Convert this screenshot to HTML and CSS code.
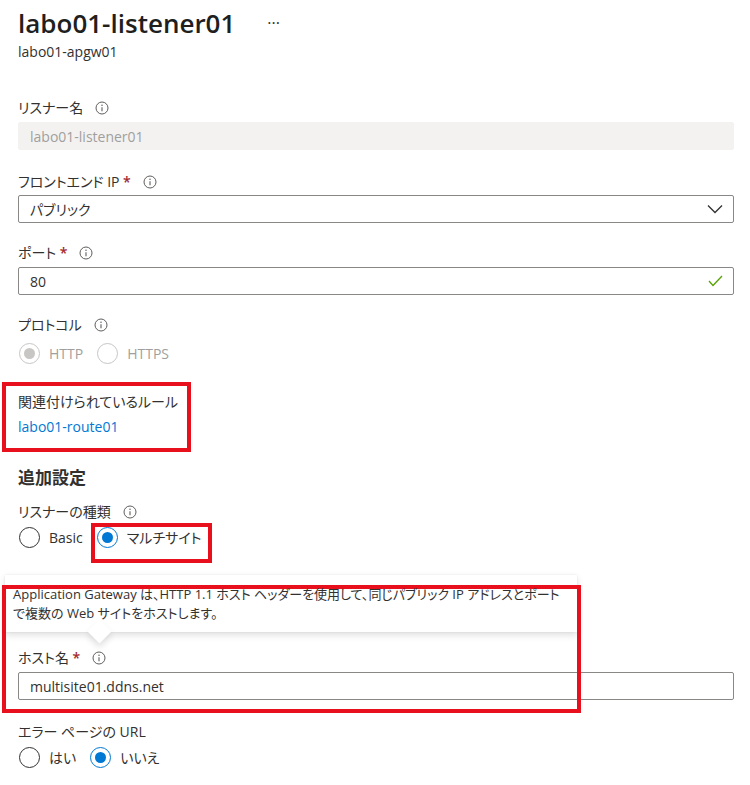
FILE: index.html
```html
<!DOCTYPE html>
<html lang="ja">
<head>
<meta charset="utf-8">
<link rel="stylesheet" href="styles.css">
</head>
<body>
<div class="page">
  <div class="title-row">
    <h1 class="title">labo01-listener01</h1>
    <span class="more">···</span>
  </div>
  <div class="subtitle">labo01-apgw01</div>

  <div class="label l-name"><span>リスナー名</span><svg class="info" width="14" height="14" viewBox="0 0 14 14"><circle cx="7" cy="7" r="6" fill="none" stroke="#605e5c" stroke-width="1"/><path d="M7 6.2v4" stroke="#605e5c" stroke-width="1.1"/><circle cx="7" cy="4.2" r="0.75" fill="#605e5c"/></svg></div>
  <div class="input disabled">labo01-listener01</div>

  <div class="label l-fe"><span>フロントエンド IP <span class="req">*</span></span><svg class="info" width="14" height="14" viewBox="0 0 14 14"><circle cx="7" cy="7" r="6" fill="none" stroke="#605e5c" stroke-width="1"/><path d="M7 6.2v4" stroke="#605e5c" stroke-width="1.1"/><circle cx="7" cy="4.2" r="0.75" fill="#605e5c"/></svg></div>
  <div class="input select"><span>パブリック</span><svg class="chev" width="16" height="10" viewBox="0 0 16 10"><polyline points="1,1.5 8,8.5 15,1.5" fill="none" stroke="#323130" stroke-width="1.3"/></svg></div>

  <div class="label l-port"><span>ポート <span class="req">*</span></span><svg class="info" width="14" height="14" viewBox="0 0 14 14"><circle cx="7" cy="7" r="6" fill="none" stroke="#605e5c" stroke-width="1"/><path d="M7 6.2v4" stroke="#605e5c" stroke-width="1.1"/><circle cx="7" cy="4.2" r="0.75" fill="#605e5c"/></svg></div>
  <div class="input valid"><span>80</span><svg class="check" width="15" height="12" viewBox="0 0 15 12"><polyline points="1,6 5,10.5 14,1" fill="none" stroke="#57a300" stroke-width="1.3"/></svg></div>

  <div class="label l-proto"><span>プロトコル</span><svg class="info" width="14" height="14" viewBox="0 0 14 14"><circle cx="7" cy="7" r="6" fill="none" stroke="#605e5c" stroke-width="1"/><path d="M7 6.2v4" stroke="#605e5c" stroke-width="1.1"/><circle cx="7" cy="4.2" r="0.75" fill="#605e5c"/></svg></div>
  <div class="radio-row r-proto">
    <span class="radio dis checked"></span><span class="rlabel dis-text">HTTP</span>
    <span class="radio dis"></span><span class="rlabel dis-text">HTTPS</span>
  </div>

  <div class="label l-rule"><span>関連付けられているルール</span></div>
  <div class="link">labo01-route01</div>

  <h2 class="section">追加設定</h2>

  <div class="label l-type"><span>リスナーの種類</span><svg class="info" width="14" height="14" viewBox="0 0 14 14"><circle cx="7" cy="7" r="6" fill="none" stroke="#605e5c" stroke-width="1"/><path d="M7 6.2v4" stroke="#605e5c" stroke-width="1.1"/><circle cx="7" cy="4.2" r="0.75" fill="#605e5c"/></svg></div>
  <div class="radio-row r-type">
    <span class="radio"></span><span class="rlabel">Basic</span>
    <span class="radio on"></span><span class="rlabel">マルチサイト</span>
  </div>

  <div class="callout">
    <div class="callout-text">Application Gateway は、HTTP 1.1 ホスト ヘッダーを使用して、同じパブリック IP アドレスとポート<br>で複数の Web サイトをホストします。</div>
    <span class="beak"></span>
  </div>

  <div class="label l-host"><span>ホスト名 <span class="req">*</span></span><svg class="info" width="14" height="14" viewBox="0 0 14 14"><circle cx="7" cy="7" r="6" fill="none" stroke="#605e5c" stroke-width="1"/><path d="M7 6.2v4" stroke="#605e5c" stroke-width="1.1"/><circle cx="7" cy="4.2" r="0.75" fill="#605e5c"/></svg></div>
  <div class="input host">multisite01.ddns.net</div>

  <div class="label l-err"><span>エラー ページの URL</span></div>
  <div class="radio-row r-err">
    <span class="radio"></span><span class="rlabel">はい</span>
    <span class="radio on"></span><span class="rlabel">いいえ</span>
  </div>

  <div class="mark m1"></div>
  <div class="mark m2"></div>
  <div class="mark m3"></div>
</div>
</body>
</html>
```

FILE: styles.css
```css
* { box-sizing: border-box; }
body {
  margin: 0;
  background: #ffffff;
  color: #323130;
  font-family: "Open Sans", "Noto Sans CJK JP", sans-serif;
  font-size: 14px;
  font-feature-settings: "palt";
}
.page {
  position: relative;
  width: 734px;
  padding-left: 18px;
  height: 785px;
}
.title-row {
  display: flex;
  align-items: center;
  gap: 32px;
  margin-top: 5px;
  height: 36px;
}
.title {
  margin: 0;
  font-size: 26px;
  font-weight: 600;
  line-height: 36px;
  color: #201f1e;
}
.more {
  font-size: 16px;
  color: #323130;
  line-height: 36px;
}
.subtitle {
  margin-top: 2px;
  line-height: 18px;
  font-size: 14px;
  color: #323130;
}
.label {
  display: flex;
  align-items: center;
  height: 20px;
  line-height: 20px;
  white-space: nowrap;
}
.label .info { margin-left: 12px; flex: none; }
.req { color: #a4262c; font-weight: 600; }
.l-name { margin-top: 37px; }
.l-fe { margin-top: 22px; }
.l-port { margin-top: 20px; }
.l-proto { margin-top: 20px; }
.l-rule { margin-top: 27px; }
.l-type { margin-top: 12px; }
.l-host { margin-top: 16px; }
.l-err { margin-top: 22px; }

.input {
  display: flex;
  align-items: center;
  justify-content: space-between;
  margin-top: 4px;
  height: 28px;
  width: 716px;
  padding: 0 10px 0 11px;
  border: 1px solid #8a8886;
  border-radius: 2px;
  background: #fff;
  color: #323130;
}
.input.select { margin-top: 3px; }
.input.disabled {
  background: #f3f2f1;
  border-color: #f3f2f1;
  color: #a19f9d;
}

.radio-row {
  display: flex;
  align-items: center;
  height: 24px;
}
.r-proto { margin-top: 6px; }
.r-type { margin-top: 3px; }
.r-err { margin-top: 3px; }
.radio {
  position: relative;
  width: 21px;
  height: 21px;
  border: 1px solid #323130;
  border-radius: 50%;
  margin-left: 1px;
  flex: none;
}
.radio.on { border-color: #0078d4; }
.radio.on::after, .radio.dis.checked::after {
  content: "";
  position: absolute;
  left: 4px; top: 4px;
  width: 11px; height: 11px;
  border-radius: 50%;
  background: #0078d4;
}
.radio.dis { border-color: #c8c6c4; }
.radio.dis.checked::after { background: #c8c6c4; }
.rlabel { margin-left: 9px; margin-right: 13px; white-space: nowrap; }
.dis-text { color: #a19f9d; }

.link {
  margin-top: 5px;
  line-height: 20px;
  color: #0078d4;
}
.section {
  margin: 29px 0 0;
  font-size: 17px;
  font-weight: 700;
  line-height: 24px;
  color: #323130;
}

.callout {
  position: relative;
  margin: 26px 0 0 -13px;
  width: 572px;
  padding: 10px 8px 9px 8px;
  background: #fff;
  box-shadow: 0 3px 7px rgba(0,0,0,0.13), 0 0 2px rgba(0,0,0,0.08);
  font-size: 13px;
  line-height: 19px;
  color: #323130;
}
.callout-text { position: relative; z-index: 2; white-space: nowrap; }
.beak {
  position: absolute;
  left: 86px;
  bottom: -8px;
  width: 17px;
  height: 17px;
  background: #fff;
  transform: rotate(45deg);
  box-shadow: 3px 3px 6px rgba(0,0,0,0.12);
  z-index: 1;
}
.callout::after {
  content: "";
  position: absolute;
  left: 0; right: 0; top: 0; bottom: 0;
  background: #fff;
  z-index: 0;
}

.mark {
  position: absolute;
  border: 4px solid #e8101c;
  pointer-events: none;
}
.m1 { left: 2px; top: 377px; width: 189px; height: 70px; }
.m2 { left: 91px; top: 518px; width: 121px; height: 40px; }
.m3 { left: 2px; top: 580px; width: 579px; height: 128px; }
```
